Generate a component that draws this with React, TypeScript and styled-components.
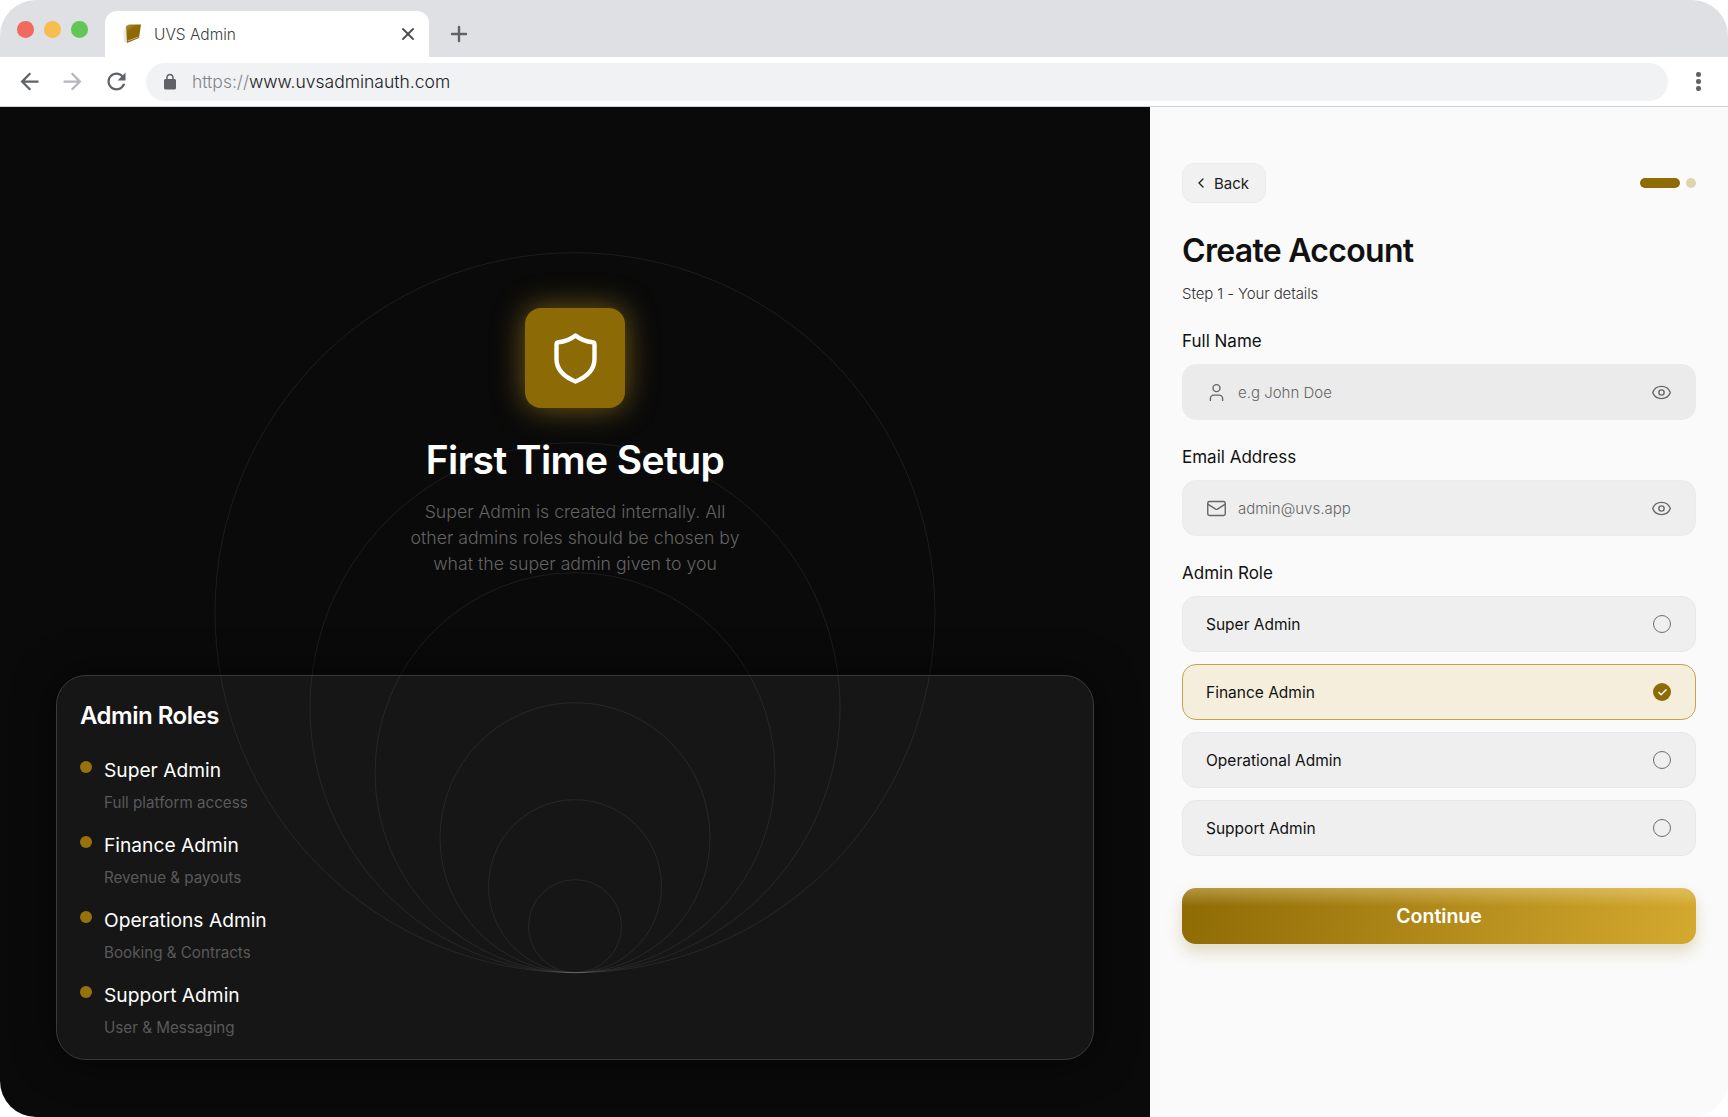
import styled, { createGlobalStyle } from "styled-components";
import { Check, ChevronLeft, Eye, Mail, Plus, User, X } from "lucide-react";

const GlobalStyle = createGlobalStyle`
  html, body {
    margin: 0;
    padding: 0;
    background: #fff;
  }
  body {
    font-family: Inter, "Liberation Sans", sans-serif;
  }
  * {
    box-sizing: border-box;
  }
`;

const Window = styled.div`
  width: 1728px;
  height: 1117px;
  border-radius: 36px;
  overflow: hidden;
  display: flex;
  flex-direction: column;
  background: #fff;
`;

const TabStrip = styled.div`
  height: 57px;
  flex: none;
  background: #dfe0e4;
  display: flex;
  align-items: flex-end;
  padding-left: 17px;
`;

const Lights = styled.div`
  width: 88px;
  height: 46px;
  padding-top: 10px;
  display: flex;
  gap: 10.5px;
`;

const Light = styled.span<{ $color: string }>`
  width: 16.5px;
  height: 16.5px;
  border-radius: 50%;
  background: ${(p) => p.$color};
`;

const Tab = styled.div`
  width: 324px;
  height: 46px;
  background: #fff;
  border-radius: 12px 12px 0 0;
  display: flex;
  align-items: center;
  padding: 0 11px 0 15px;
  color: #4a4c50;
`;

const TabTitle = styled.span`
  margin-left: 10px;
  flex: 1;
  font-size: 15.5px;
  font-weight: 300;
  color: #3c4043;
`;

const NewTab = styled.div`
  margin-left: 18px;
  height: 46px;
  display: flex;
  align-items: center;
  color: #5f6368;
`;

const Toolbar = styled.div`
  height: 50px;
  flex: none;
  border-bottom: 1px solid #cfd0d2;
  display: flex;
  align-items: center;
  padding: 0 27px 6px 16px;
`;

const NavButton = styled.div<{ $muted?: boolean; $gap: number }>`
  width: 27px;
  height: 27px;
  margin: 6px ${(p) => p.$gap}px 0 0;
  color: ${(p) => (p.$muted ? "#b5b7ba" : "#5f6368")};
  svg {
    display: block;
    width: 100%;
    height: 100%;
    fill: currentColor;
  }
`;

const AddressBar = styled.div`
  flex: 1;
  height: 38px;
  margin-top: 6px;
  border-radius: 19px;
  background: #f1f2f4;
  display: flex;
  align-items: center;
  padding-left: 15px;
  color: #5f6368;
  svg {
    fill: currentColor;
  }
`;

const Url = styled.span`
  margin-left: 13px;
  font-size: 17.5px;
  font-weight: 300;
  color: #202124;
`;

const UrlScheme = styled.span`
  color: #80868b;
`;

const Kebab = styled.div`
  margin: 6px 0 0 28px;
  width: 5px;
  display: flex;
  flex-direction: column;
  gap: 2.5px;
`;

const KebabDot = styled.span`
  width: 4.5px;
  height: 4.5px;
  border-radius: 50%;
  background: #5f6368;
`;

const Body = styled.div`
  flex: 1;
  display: flex;
  min-height: 0;
`;

const LeftPanel = styled.section`
  position: relative;
  width: 1150px;
  flex: none;
  background: #0a0a0a;
  display: flex;
  flex-direction: column;
  align-items: center;
  padding: 201px 56px 57px;
`;

const Rings = styled.svg`
  position: absolute;
  left: 0;
  top: 0;
  width: 1150px;
  height: 1010px;
  pointer-events: none;
`;

const ShieldBox = styled.div`
  position: relative;
  width: 100px;
  height: 100px;
  border-radius: 16px;
  background: #8c6a06;
  box-shadow: 0 0 30px rgba(205, 160, 30, 0.55);
  display: flex;
  align-items: center;
  justify-content: center;
`;

const SetupTitle = styled.h1`
  position: relative;
  margin: 28px 0 0;
  font-size: 39px;
  line-height: 48px;
  font-weight: 600;
  letter-spacing: -0.6px;
  color: #fff;
`;

const SetupText = styled.p`
  position: relative;
  margin: 15px 0 0;
  width: 345px;
  font-size: 17.7px;
  line-height: 26px;
  font-weight: 300;
  text-align: center;
  color: #636363;
`;

const RolesCard = styled.div`
  position: relative;
  margin-top: auto;
  width: 1038px;
  height: 385px;
  border-radius: 30px;
  border: 1px solid #3a3a3a;
  background: rgba(255, 255, 255, 0.05);
  box-shadow: 0 0 40px rgba(0, 0, 0, 0.6);
  padding: 25px 23px;
`;

const RolesTitle = styled.h2`
  margin: 0 0 24px;
  font-size: 24px;
  line-height: 30px;
  font-weight: 600;
  letter-spacing: -0.5px;
  color: #fff;
`;

const RoleItem = styled.div`
  height: 75px;
  display: grid;
  grid-template-columns: 12px 1fr;
  column-gap: 12px;
  grid-template-rows: 30px 30px;
  row-gap: 3px;
`;

const RoleDot = styled.span`
  width: 12px;
  height: 12px;
  margin-top: 6px;
  border-radius: 50%;
  background: #97710a;
`;

const RoleName = styled.div`
  font-size: 19.2px;
  line-height: 30px;
  font-weight: 400;
  color: #fff;
`;

const RoleDesc = styled.div`
  grid-column: 2;
  font-size: 15.2px;
  line-height: 30px;
  font-weight: 400;
  color: #595959;
`;

const RightPanel = styled.section`
  flex: 1;
  background: #fafafa;
  padding: 56px 32px 0;
  display: flex;
  flex-direction: column;
`;

const TopRow = styled.div`
  display: flex;
  align-items: center;
  justify-content: space-between;
`;

const BackButton = styled.button`
  width: 84px;
  height: 40px;
  border-radius: 12px;
  border: 1px solid #ececec;
  background: #f1f1f1;
  display: flex;
  align-items: center;
  padding: 0 0 0 10px;
  gap: 5px;
  font-family: inherit;
  font-size: 15px;
  color: #222;
`;

const Progress = styled.div`
  display: flex;
  align-items: center;
  gap: 6px;
`;

const ProgressPill = styled.span`
  width: 40px;
  height: 10px;
  border-radius: 5px;
  background: #8f6b05;
`;

const ProgressDot = styled.span`
  width: 10px;
  height: 10px;
  border-radius: 50%;
  background: #e0d4ae;
`;

const Title = styled.h2`
  margin: 28px 0 0;
  font-size: 32px;
  line-height: 40px;
  font-weight: 600;
  letter-spacing: -0.7px;
  color: #111;
`;

const Subtitle = styled.p`
  margin: 12px 0 0;
  font-size: 15px;
  line-height: 22px;
  font-weight: 300;
  letter-spacing: -0.1px;
  color: #333;
`;

const FieldLabel = styled.div<{ $top: number }>`
  margin: ${(p) => p.$top}px 0 0;
  font-size: 17px;
  line-height: 24px;
  font-weight: 400;
  color: #111;
`;

const InputBox = styled.div<{ $dark?: boolean }>`
  margin-top: 11px;
  height: 56px;
  border-radius: 14px;
  background: ${(p) => (p.$dark ? "#ebebeb" : "#eeeeee")};
  border: 1px solid ${(p) => (p.$dark ? "#ebebeb" : "#ececec")};
  display: flex;
  align-items: center;
  padding: 0 23px;
  color: #666;
`;

const Placeholder = styled.span`
  flex: 1;
  margin-left: 11px;
  font-size: 15px;
  font-weight: 300;
  color: #666;
`;

const OptionList = styled.div`
  margin-top: 11px;
  display: flex;
  flex-direction: column;
  gap: 12px;
`;

const Option = styled.div<{ $selected?: boolean }>`
  height: 56px;
  border-radius: 14px;
  background: ${(p) => (p.$selected ? "#f5eedc" : "#efefef")};
  border: 1px solid ${(p) => (p.$selected ? "#c2a44c" : "#e8e8e8")};
  display: flex;
  align-items: center;
  justify-content: space-between;
  padding: 0 24px 0 23px;
  font-size: 15.5px;
  color: #111;
`;

const Radio = styled.span<{ $selected?: boolean }>`
  width: 18px;
  height: 18px;
  border-radius: 50%;
  border: ${(p) => (p.$selected ? "none" : "1.6px solid #6e6e6e")};
  background: ${(p) => (p.$selected ? "#8f6b05" : "transparent")};
  display: flex;
  align-items: center;
  justify-content: center;
  color: #fff;
`;

const ContinueButton = styled.button`
  margin-top: 32px;
  height: 56px;
  border: none;
  border-radius: 14px;
  background:
    linear-gradient(180deg, rgba(255, 240, 190, 0.32) 0, rgba(255, 240, 190, 0) 18px),
    linear-gradient(100deg, #8f6b05 0%, #d4a92f 100%);
  box-shadow: 0 8px 16px rgba(143, 107, 5, 0.22);
  font-family: inherit;
  font-size: 19.5px;
  font-weight: 600;
  color: #fff;
`;

const rings = [360, 265, 200, 135, 86.5, 46.5];
const roles = [
  { name: "Super Admin", desc: "Full platform access" },
  { name: "Finance Admin", desc: "Revenue & payouts" },
  { name: "Operations Admin", desc: "Booking & Contracts" },
  { name: "Support Admin", desc: "User & Messaging" },
];
const options = ["Super Admin", "Finance Admin", "Operational Admin", "Support Admin"];

const App = () => {
  return (
    <Window>
      <GlobalStyle />
      <TabStrip>
        <Lights>
          <Light $color="#f06a60" />
          <Light $color="#f7bd4f" />
          <Light $color="#62c654" />
        </Lights>
        <Tab>
          <svg width="24" height="24" viewBox="0 0 24 24">
            <defs>
              <linearGradient id="fav" x1="0" y1="0" x2="0.6" y2="1">
                <stop offset="0" stopColor="#b39a50" />
                <stop offset="0.35" stopColor="#8f6b05" />
                <stop offset="1" stopColor="#8a6604" />
              </linearGradient>
            </defs>
            <path d="M3.5 9 6 4l1 17-3-1z" fill="#e6e6e6" />
            <path d="M6 4 9 2.5h12L19 16 7 21z" fill="url(#fav)" />
            <path d="M7.5 19 18.5 15" stroke="#d8c68e" strokeWidth="0.8" />
          </svg>
          <TabTitle>UVS Admin</TabTitle>
          <X size={20} strokeWidth={2.2} />
        </Tab>
        <NewTab>
          <Plus size={24} strokeWidth={2.4} />
        </NewTab>
      </TabStrip>
      <Toolbar>
        <NavButton $gap={16}>
          <svg viewBox="0 0 24 24">
            <path d="M20 11H7.83l5.59-5.59L12 4l-8 8 8 8 1.41-1.41L7.83 13H20v-2z" />
          </svg>
        </NavButton>
        <NavButton $muted $gap={17}>
          <svg viewBox="0 0 24 24">
            <path d="M12 4l-1.41 1.41L16.17 11H4v2h12.17l-5.58 5.59L12 20l8-8z" />
          </svg>
        </NavButton>
        <NavButton $gap={16}>
          <svg viewBox="0 0 24 24">
            <path d="M17.65 6.35C16.2 4.9 14.21 4 12 4c-4.42 0-7.99 3.58-7.99 8s3.57 8 7.99 8c3.73 0 6.84-2.55 7.73-6h-2.08c-.82 2.33-3.04 4-5.65 4-3.31 0-6-2.69-6-6s2.69-6 6-6c1.66 0 3.14.69 4.22 1.78L13 11h7V4l-2.35 2.35z" />
          </svg>
        </NavButton>
        <AddressBar>
          <svg width="18" height="18" viewBox="0 0 24 24">
            <path d="M18 8h-1V6c0-2.76-2.24-5-5-5S7 3.24 7 6v2H6c-1.1 0-2 .9-2 2v10c0 1.1.9 2 2 2h12c1.1 0 2-.9 2-2V10c0-1.1-.9-2-2-2zM9 6c0-1.66 1.34-3 3-3s3 1.34 3 3v2H9V6z" />
          </svg>
          <Url>
            <UrlScheme>https://</UrlScheme>www.uvsadminauth.com
          </Url>
        </AddressBar>
        <Kebab>
          <KebabDot />
          <KebabDot />
          <KebabDot />
        </Kebab>
      </Toolbar>
      <Body>
        <LeftPanel>
          <Rings viewBox="0 0 1150 1010" fill="none">
            {rings.map((r) => (
              <circle
                key={r}
                cx="575"
                cy={865.7 - r}
                r={r}
                stroke="rgba(255, 255, 255, 0.075)"
                strokeWidth="1"
              />
            ))}
          </Rings>
          <ShieldBox>
            <svg width="43" height="51" viewBox="0 0 43 51" fill="none">
              <path
                d="M21.5 2.5Q14 8.5 4.5 9.2 2.5 9.4 2.5 11.5V26C2.5 37 10.5 44 21.5 48.5 32.5 44 40.5 37 40.5 26V11.5Q40.5 9.4 38.5 9.2 29 8.5 21.5 2.5Z"
                stroke="#fff"
                strokeWidth="4.4"
                strokeLinejoin="round"
              />
            </svg>
          </ShieldBox>
          <SetupTitle>First Time Setup</SetupTitle>
          <SetupText>
            Super Admin is created internally. All other admins roles should be chosen by what the
            super admin given to you
          </SetupText>
          <RolesCard>
            <RolesTitle>Admin Roles</RolesTitle>
            {roles.map((role) => (
              <RoleItem key={role.name}>
                <RoleDot />
                <RoleName>{role.name}</RoleName>
                <RoleDesc>{role.desc}</RoleDesc>
              </RoleItem>
            ))}
          </RolesCard>
        </LeftPanel>
        <RightPanel>
          <TopRow>
            <BackButton>
              <ChevronLeft size={16} strokeWidth={2} />
              Back
            </BackButton>
            <Progress>
              <ProgressPill />
              <ProgressDot />
            </Progress>
          </TopRow>
          <Title>Create Account</Title>
          <Subtitle>Step 1 - Your details</Subtitle>
          <FieldLabel $top={24}>Full Name</FieldLabel>
          <InputBox $dark>
            <User size={21} strokeWidth={1.6} />
            <Placeholder>e.g John Doe</Placeholder>
            <Eye size={21} strokeWidth={1.6} />
          </InputBox>
          <FieldLabel $top={25}>Email Address</FieldLabel>
          <InputBox>
            <Mail size={21} strokeWidth={1.6} />
            <Placeholder>admin@uvs.app</Placeholder>
            <Eye size={21} strokeWidth={1.6} />
          </InputBox>
          <FieldLabel $top={25}>Admin Role</FieldLabel>
          <OptionList>
            {options.map((option) => (
              <Option key={option} $selected={option === "Finance Admin"}>
                {option}
                <Radio $selected={option === "Finance Admin"}>
                  {option === "Finance Admin" && <Check size={11} strokeWidth={3} />}
                </Radio>
              </Option>
            ))}
          </OptionList>
          <ContinueButton>Continue</ContinueButton>
        </RightPanel>
      </Body>
    </Window>
  );
};

export default App;
